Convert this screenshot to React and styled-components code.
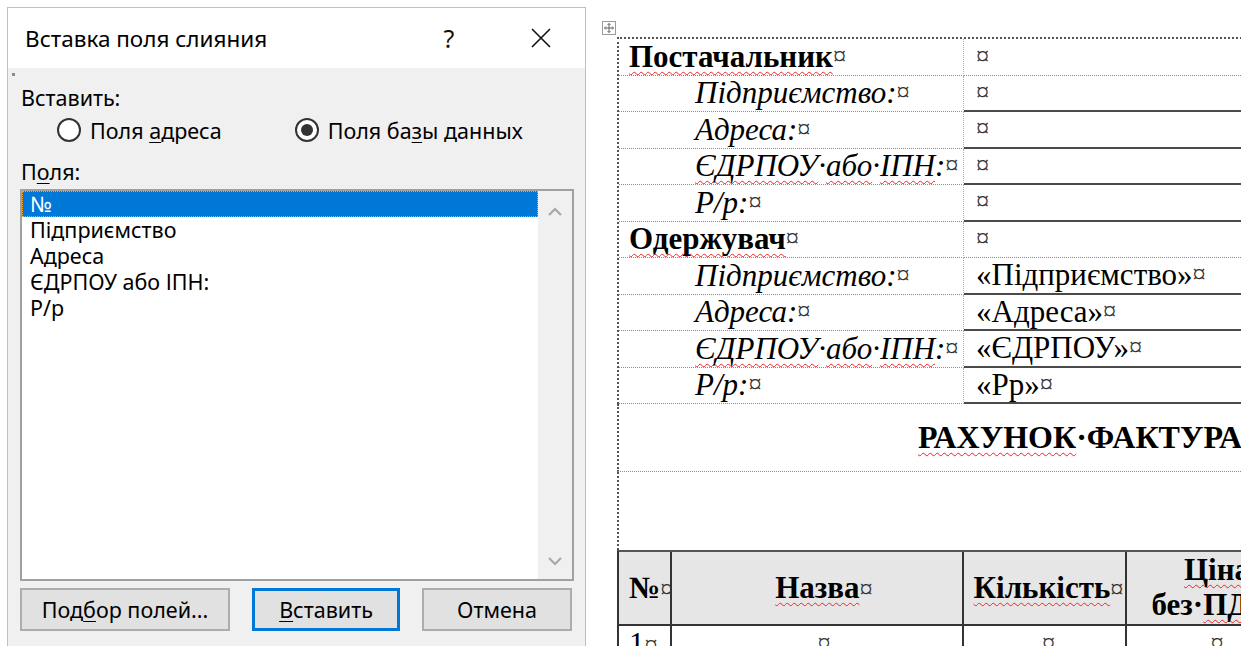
import React from 'react';
import styled, { createGlobalStyle } from 'styled-components';

const UI = `"Noto Sans", "Open Sans", sans-serif`;
const SERIF = `"Liberation Serif", "Times New Roman", serif`;

const Global = createGlobalStyle`
  html, body { margin: 0; padding: 0; background: #fff; }
  body { width: 1248px; height: 646px; overflow: hidden; }
  * { box-sizing: border-box; }
`;

const Screen = styled.div`
  display: flex;
  align-items: flex-start;
  height: 646px;
  overflow: hidden;
  background: #fff;
`;

/* ---------- merge field dialog ---------- */

const Dialog = styled.section`
  margin: 7px 0 0 7px;
  width: 579px;
  height: 660px;
  flex: none;
  border: 1px solid #a9c3e0;
  border-bottom: none;
  background: #f0f0f0;
  display: flex;
  flex-direction: column;
  font-family: ${UI};
  color: #000;
`;

const TitleBar = styled.header`
  height: 60px;
  flex: none;
  background: #fff;
  display: flex;
  align-items: center;
  padding: 0 16px 0 17px;
`;

const Title = styled.h1`
  margin: 0;
  font-size: 22.5px;
  font-weight: 400;
`;

const TitleButtons = styled.div`
  margin-left: auto;
  display: flex;
  gap: 36px;
`;

const TitleButton = styled.button`
  width: 56px;
  height: 40px;
  border: none;
  background: transparent;
  padding: 0;
  display: flex;
  align-items: center;
  justify-content: center;
  font-family: ${UI};
  font-size: 25px;
  color: #111;
`;

const Body = styled.div`
  flex: 1;
  display: flex;
  flex-direction: column;
  padding: 0 11px 0 12px;
  font-size: 21.5px;
`;

/* tiny focus speck Windows leaves at the top-left of the client area */
const Speck = styled.span`
  display: block;
  width: 3px;
  height: 3px;
  margin: 5px 0 0 -8px;
  background: #8a8a8a;
`;

const SectionLabel = styled.div`
  line-height: 26px;
  height: 26px;
  margin-top: ${(p) => p.$top}px;
  margin-left: 1px;
`;

const RadioRow = styled.div`
  display: flex;
  align-items: center;
  height: 30px;
  margin-top: 4px;
  padding-left: 37px;
  gap: 73px;
`;

const RadioOption = styled.label`
  display: flex;
  align-items: center;
  gap: 9px;
`;

const RadioCircle = styled.span`
  width: 24px;
  height: 24px;
  border-radius: 50%;
  border: 2px solid #333;
  background: #fff;
  display: flex;
  align-items: center;
  justify-content: center;

  &::after {
    content: '';
    width: 12px;
    height: 12px;
    border-radius: 50%;
    background: ${(p) => (p.$checked ? '#333' : 'transparent')};
  }
`;

const Key = styled.u`
  text-decoration-thickness: 1px;
  text-underline-offset: 3px;
`;

const ListBox = styled.div`
  margin-top: 4px;
  height: 392px;
  border: 2px solid #a0a0a0;
  background: #fff;
  display: flex;
`;

const Items = styled.ul`
  flex: 1;
  margin: 0;
  padding: 0;
  list-style: none;
`;

const Item = styled.li`
  height: 26px;
  line-height: 26px;
  padding-left: 8px;
  background: ${(p) => (p.$selected ? '#0078d7' : 'transparent')};
  color: ${(p) => (p.$selected ? '#fff' : '#000')};
  outline: ${(p) => (p.$selected ? '1px dotted #f2a33a' : 'none')};
  outline-offset: -1px;
  white-space: nowrap;
`;

const ScrollBar = styled.div`
  width: 34px;
  flex: none;
  background: #f0f0f0;
  display: flex;
  flex-direction: column;
  justify-content: space-between;
`;

const ScrollArrow = styled.div`
  height: ${(p) => p.$h}px;
  display: flex;
  align-items: center;
  justify-content: center;
`;

const ButtonRow = styled.div`
  margin-top: 7px;
  display: flex;
  gap: 22px;
`;

const Button = styled.button`
  width: ${(p) => p.$w}px;
  height: 43px;
  background: #e1e1e1;
  border: ${(p) => (p.$default ? '3px solid #0078d7' : '2px solid #adadad')};
  font-family: ${UI};
  font-size: 21.5px;
  color: #000;
  padding: 0;
  white-space: nowrap;
`;

const Chevron = ({ up }) => (
  <svg width="16" height="10" viewBox="0 0 16 10">
    <path
      d={up ? 'M2 8 L8 2 L14 8' : 'M2 2 L8 8 L14 2'}
      fill="none"
      stroke="#a8a8a8"
      strokeWidth="2.2"
    />
  </svg>
);

const CloseGlyph = () => (
  <svg width="22" height="22" viewBox="0 0 22 22">
    <path d="M2 2 L20 20 M20 2 L2 20" stroke="#111" strokeWidth="1.6" />
  </svg>
);

const fields = ['№', 'Підприємство', 'Адреса', 'ЄДРПОУ або ІПН:', 'Р/р'];

function MergeFieldDialog() {
  return (
    <Dialog>
      <TitleBar>
        <Title>Вставка поля слияния</Title>
        <TitleButtons>
          <TitleButton>?</TitleButton>
          <TitleButton>
            <CloseGlyph />
          </TitleButton>
        </TitleButtons>
      </TitleBar>
      <Body>
        <Speck />
        <SectionLabel $top={9}>Вставить:</SectionLabel>
        <RadioRow>
          <RadioOption>
            <RadioCircle />
            <span>
              Поля <Key>а</Key>дреса
            </span>
          </RadioOption>
          <RadioOption>
            <RadioCircle $checked />
            <span>
              Поля ба<Key>з</Key>ы данных
            </span>
          </RadioOption>
        </RadioRow>
        <SectionLabel $top={14}>
          П<Key>о</Key>ля:
        </SectionLabel>
        <ListBox>
          <Items>
            {fields.map((f, i) => (
              <Item key={f} $selected={i === 0}>
                {f}
              </Item>
            ))}
          </Items>
          <ScrollBar>
            <ScrollArrow $h={42}>
              <Chevron up />
            </ScrollArrow>
            <ScrollArrow $h={36}>
              <Chevron />
            </ScrollArrow>
          </ScrollBar>
        </ListBox>
        <ButtonRow>
          <Button $w={210}>
            Под<Key>б</Key>ор полей...
          </Button>
          <Button $w={148} $default>
            <Key>В</Key>ставить
          </Button>
          <Button $w={150}>Отмена</Button>
        </ButtonRow>
      </Body>
    </Dialog>
  );
}

/* ---------- document ---------- */

const DocPane = styled.main`
  margin-left: 4px;
  width: 651px;
  height: 646px;
  flex: none;
  overflow: hidden;
  padding: 37px 0 0 27px;
  background: #fff;
  font-family: ${SERIF};
  font-size: 31px;
  color: #000;
`;

const DocBody = styled.div`
  position: relative;
  width: 900px;
`;

const MoveHandle = styled.div`
  position: absolute;
  left: -15px;
  top: -16px;
  width: 14px;
  height: 14px;
  border: 1px solid #9a9a9a;
  background: #fff;
  display: flex;
  align-items: center;
  justify-content: center;
`;

const PartyGrid = styled.div`
  display: grid;
  grid-template-columns: 345px 1fr;
  grid-auto-rows: 36.5px;
  border-top: 2px dotted #555;
  border-left: 2px dotted #555;
`;

const LabelCell = styled.div`
  display: flex;
  align-items: center;
  padding-left: ${(p) => (p.$head ? 10 : 76)}px;
  font-weight: ${(p) => (p.$head ? 700 : 400)};
  font-style: ${(p) => (p.$head ? 'normal' : 'italic')};
  border-bottom: 1px dotted #8c8c8c;
  border-right: 1px dotted #b0b0b0;
  white-space: nowrap;
  overflow: hidden;
`;

const ValueCell = styled.div`
  display: flex;
  align-items: center;
  padding-left: 12px;
  border-bottom: ${(p) => (p.$solid ? '2px solid #4a4a4a' : '1px dotted #8c8c8c')};
  white-space: nowrap;
`;

const Mark = styled.span`
  font-size: 0.85em;
  font-weight: 400;
  font-style: normal;
  color: #333;
`;

const Spell = styled.span`
  text-decoration: underline wavy #e8262b;
  text-decoration-thickness: 1px;
  text-underline-offset: 4px;
  text-decoration-skip-ink: none;
`;

const HeadingRow = styled.div`
  height: 68px;
  display: flex;
  align-items: center;
  padding-left: 299px;
  font-size: 32px;
  font-weight: 700;
  border-left: 2px dotted #555;
  border-bottom: 1px dotted #8c8c8c;
  white-space: nowrap;
`;

const Spacer = styled.div`
  height: 78px;
  border-left: 2px dotted #555;
`;

const GoodsTable = styled.div`
  display: grid;
  grid-template-columns: 53px 292px 163px 182px;
  grid-template-rows: 74px 60px;
  border-top: 2px solid #555;
  border-left: 2px solid #333;
`;

const GoodsCell = styled.div`
  display: flex;
  flex-direction: column;
  align-items: ${(p) => (p.$start ? 'flex-start' : 'center')};
  justify-content: ${(p) => (p.$top ? 'flex-start' : 'center')};
  padding-left: ${(p) => (p.$start ? 10 : p.$shift || 0)}px;
  text-align: center;
  line-height: 35px;
  background: ${(p) => (p.$head ? '#e6e6e6' : '#fff')};
  font-weight: ${(p) => (p.$head ? 700 : 400)};
  border-right: 2px solid #333;
  border-bottom: 2px solid #333;
  white-space: nowrap;
`;

const HandleGlyph = () => (
  <svg width="10" height="10" viewBox="0 0 10 10">
    <path
      d="M5 0.5 V9.5 M0.5 5 H9.5 M3.5 2 L5 0.5 L6.5 2 M3.5 8 L5 9.5 L6.5 8 M2 3.5 L0.5 5 L2 6.5 M8 3.5 L9.5 5 L8 6.5"
      fill="none"
      stroke="#555"
      strokeWidth="0.9"
    />
  </svg>
);

const Requisites = () => (
  <>
    <Spell>ЄДРПОУ</Spell>·<Spell>або</Spell>·<Spell>ІПН</Spell>:
  </>
);

const parties = [
  { label: <Spell>Постачальник</Spell>, head: true },
  { label: 'Підприємство:', solid: true },
  { label: 'Адреса:', solid: true },
  { label: <Requisites />, solid: true },
  { label: 'Р/р:', solid: true },
  { label: <Spell>Одержувач</Spell>, head: true },
  { label: 'Підприємство:', value: '«Підприємство»', solid: true },
  { label: 'Адреса:', value: '«Адреса»', solid: true },
  { label: <Requisites />, value: '«ЄДРПОУ»', solid: true },
  { label: 'Р/р:', value: '«Рр»', solid: true },
];

function InvoiceDocument() {
  return (
    <DocPane>
      <DocBody>
        <MoveHandle>
          <HandleGlyph />
        </MoveHandle>
        <PartyGrid>
          {parties.map((row, i) => (
            <React.Fragment key={i}>
              <LabelCell $head={row.head}>
                {row.label}
                <Mark>¤</Mark>
              </LabelCell>
              <ValueCell $solid={row.solid}>
                {row.value}
                <Mark>¤</Mark>
              </ValueCell>
            </React.Fragment>
          ))}
        </PartyGrid>
        <HeadingRow>
          <Spell>РАХУНОК</Spell>·ФАКТУРА
        </HeadingRow>
        <Spacer />
        <GoodsTable>
          <GoodsCell $head $start>
            <span>
              №<Mark>¤</Mark>
            </span>
          </GoodsCell>
          <GoodsCell $head $shift={14}>
            <span>
              <Spell>Назва</Spell>
              <Mark>¤</Mark>
            </span>
          </GoodsCell>
          <GoodsCell $head $shift={8}>
            <span>
              <Spell>Кількість</Spell>
              <Mark>¤</Mark>
            </span>
          </GoodsCell>
          <GoodsCell $head>
            <span>
              <Spell>Ціна</Spell>
            </span>
            <span>
              без·<Spell>ПДВ</Spell>
              <Mark>¤</Mark>
            </span>
          </GoodsCell>
          <GoodsCell $start $top>
            <span>
              1<Mark>¤</Mark>
            </span>
          </GoodsCell>
          <GoodsCell $top $shift={14}>
            <Mark>¤</Mark>
          </GoodsCell>
          <GoodsCell $top $shift={8}>
            <Mark>¤</Mark>
          </GoodsCell>
          <GoodsCell $top>
            <Mark>¤</Mark>
          </GoodsCell>
        </GoodsTable>
      </DocBody>
    </DocPane>
  );
}

export default function App() {
  return (
    <>
      <Global />
      <Screen>
        <MergeFieldDialog />
        <InvoiceDocument />
      </Screen>
    </>
  );
}
